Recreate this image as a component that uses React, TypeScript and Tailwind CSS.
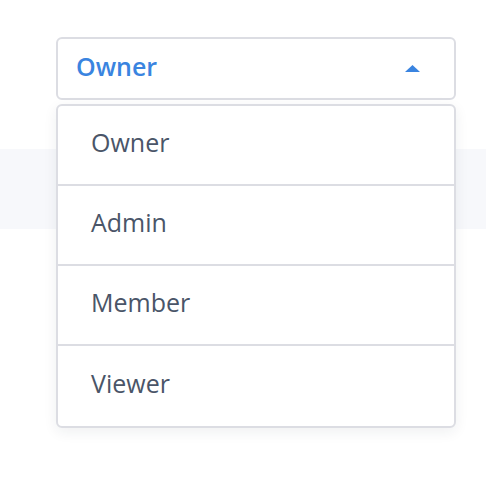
import { useState } from "react";

const roles = ["Owner", "Admin", "Member", "Viewer"];

export default function App() {
	const [selected, setSelected] = useState("Owner");
	const [open, setOpen] = useState(true);

	return (
		<div
			className="relative w-[486px] h-[480px] bg-white overflow-hidden"
			style={{ fontFamily: '"Open Sans", "Liberation Sans", sans-serif' }}
		>
			<div className="pt-[37px] pl-[56px]">
				<button
					type="button"
					onClick={() => setOpen(!open)}
					className="w-[400px] h-[63px] flex items-center justify-between pl-[18px] pr-[34px] border-2 border-[#dcdde3] rounded-md bg-white"
				>
					<span className="text-[25px] font-semibold text-[#3a84e0] leading-none pb-[5px]">
						{selected}
					</span>
					<svg width="15" height="7" viewBox="0 0 15 7">
						<path d="M7.5 0 L15 7 L0 7 Z" fill="#3a84e0" />
					</svg>
				</button>
			</div>

			<div className="mt-[49px] h-[80px] bg-[#f7f8fb]" />

			{open && (
				<div className="absolute left-[56px] top-[104px] w-[400px] bg-white border-2 border-[#dcdde3] rounded-md shadow-[0_4px_14px_rgba(30,40,60,0.07)] overflow-hidden">
					{roles.map((role, i) => (
						<div
							key={role}
							onClick={() => setSelected(role)}
							className={`flex items-center pl-[33px] pb-[5px] text-[25px] text-[#4a5568] leading-none ${
								i === 0 ? "h-[78px]" : "h-[80px] border-t-2 border-[#dcdde3]"
							} ${i === roles.length - 1 ? "h-[82px]" : ""}`}
						>
							{role}
						</div>
					))}
				</div>
			)}
		</div>
	);
}
